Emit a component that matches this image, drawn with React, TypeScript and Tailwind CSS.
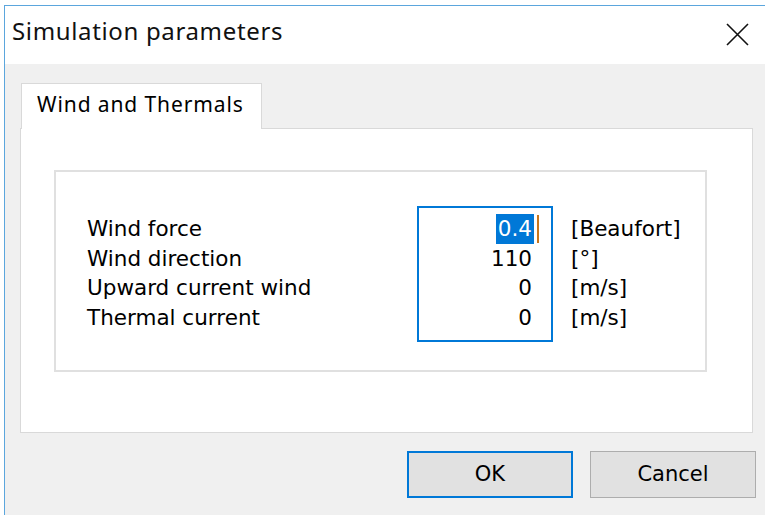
type Param = {
  label: string;
  value: string;
  unit: string;
};

const PARAMS: Param[] = [
  { label: 'Wind force', value: '0.4', unit: '[Beaufort]' },
  { label: 'Wind direction', value: '110', unit: '[°]' },
  { label: 'Upward current wind', value: '0', unit: '[m/s]' },
  { label: 'Thermal current', value: '0', unit: '[m/s]' },
];

function CloseGlyph() {
  return (
    <svg width="23" height="23" viewBox="0 0 23 23" aria-hidden="true">
      <path d="M1 1 L22 22 M22 1 L1 22" stroke="#111" strokeWidth="1.6" fill="none" />
    </svg>
  );
}

export default function App() {
  return (
    <div className="h-[515px] w-[765px] overflow-hidden bg-white font-['DejaVu_Sans',sans-serif] text-black">
      <div className="ml-[4px] mt-[5px] flex h-[510px] flex-col border-l border-t border-[#5ba6dd] bg-[#f0f0f0]">
        {/* title bar */}
        <div className="flex h-[58px] shrink-0 items-start justify-between bg-white pl-[7px] pr-[16px]">
          <span className="pt-[13px] font-['Noto_Sans',sans-serif] text-[24px] leading-none tracking-[0.65px] text-[#111]">
            Simulation parameters
          </span>
          <div className="pt-[17px]">
            <CloseGlyph />
          </div>
        </div>

        <div className="pt-[19px]">
          <div className="pl-[15px]">
            <div className="relative z-10 -mb-px ml-px flex h-[46px] w-[241px] items-center border border-b-0 border-[#d9d9d9] bg-white pb-[5px] pl-[15px]">
              <span className="font-['Noto_Sans',sans-serif] text-[21px] leading-none tracking-[0.9px]">Wind and Thermals</span>
            </div>

            {/* tab page */}
            <div className="h-[305px] w-[733px] border border-[#d9d9d9] bg-white pl-[33px] pt-[41px]">
              <div className="h-[202px] w-[653px] border-2 border-[#e0e0e0]">
                <div className="flex pl-[31px] pt-[34px] text-[21.5px]">
                  <div className="w-[330px] pt-[8px]">
                    {PARAMS.map(p => (
                      <div key={p.label} className="h-[29.5px] leading-[29.5px]">
                        {p.label}
                      </div>
                    ))}
                  </div>

                  <div className="h-[136px] w-[136px] border-2 border-[#0078d7] pr-[19px] pt-[6px]">
                    {PARAMS.map((p, i) => (
                      <div key={p.label} className="flex h-[29.5px] justify-end leading-[29.5px]">
                        {i === 0 ? (
                          <span className="relative -mr-[2px] bg-[#0078d7] px-[2px] text-white">
                            {p.value}
                            <span className="absolute left-full top-[1px] ml-[3px] h-[28px] w-[2px] bg-[#c8761c]" />
                          </span>
                        ) : (
                          <span>{p.value}</span>
                        )}
                      </div>
                    ))}
                  </div>

                  <div className="pl-[18px] pt-[8px]">
                    {PARAMS.map(p => (
                      <div key={p.label} className="h-[29.5px] leading-[29.5px]">
                        {p.unit}
                      </div>
                    ))}
                  </div>
                </div>
              </div>
            </div>
          </div>

          <div className="mt-[18px] flex justify-end gap-[17px] pr-[9px] text-[21px]">
            <button type="button" className="h-[47px] w-[166px] border-2 border-[#0078d7] bg-[#e1e1e1]">
              OK
            </button>
            <button type="button" className="h-[47px] w-[166px] border border-[#adadad] bg-[#e1e1e1]">
              Cancel
            </button>
          </div>
        </div>
      </div>
    </div>
  );
}
